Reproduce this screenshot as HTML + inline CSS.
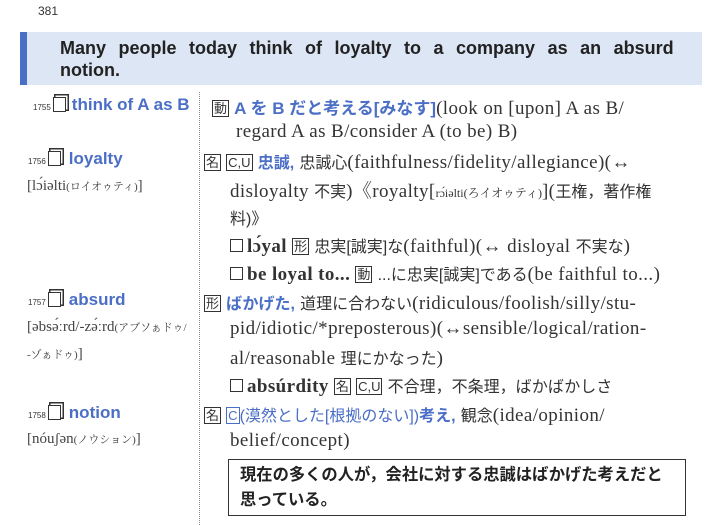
<!DOCTYPE html>
<html><head><meta charset="utf-8"><style>
body{margin:0;width:720px;height:525px;background:#fff;position:relative;overflow:hidden;font-family:"Liberation Serif","Noto Serif CJK SC",serif;color:#333}
.a{position:absolute;white-space:nowrap}
.sans{font-family:"Liberation Sans","Noto Sans CJK JP",sans-serif}
.blue{color:#4b6fc6}
.hw{font-family:"Liberation Sans","Noto Sans CJK JP",sans-serif;font-weight:bold;color:#4b6fc6;font-size:17px}
.num{font-size:8px;font-family:"Liberation Sans",sans-serif;color:#333}
.cb{display:inline-block;width:11px;height:13px;border:1.5px solid #333;box-shadow:2px -2px 0 -0.5px #fff,2px -2px 0 1px #333;vertical-align:-2px;margin:0 8px 0 2px}
.bx{display:inline-block;border:1.3px solid #333;font-size:13px;line-height:15px;padding:0 1px;font-family:"Liberation Sans","Noto Sans CJK JP",sans-serif;vertical-align:1px;letter-spacing:0}
.r{font-size:19px;letter-spacing:0.4px}
.j{font-family:"Liberation Sans","Noto Sans CJK JP",sans-serif;font-size:16px;letter-spacing:0}
.pr{font-size:15px;color:#444}
.sq{display:inline-block;width:11px;height:11px;border:1.5px solid #333;margin-right:4px;vertical-align:0}
</style></head><body>
<div class="a sans" style="left:38px;top:4px;font-size:12px;color:#333">381</div>
<div class="a" style="left:20px;top:32px;width:682px;height:53px;background:#dce6f4"></div>
<div class="a" style="left:20px;top:32px;width:7px;height:53px;background:#4a6fc7"></div>
<div class="a sans" style="left:60px;top:37px;font-size:18px;font-weight:bold;color:#222;line-height:22px;word-spacing:7.5px">Many people today think of loyalty to a company as an absurd<br>notion.</div>
<div class="a" style="left:199px;top:92px;height:433px;border-left:1.5px dotted #888"></div>

<div class="a" style="left:33px;top:95px"><span class="num">1755</span><span class="cb" style="margin-right:6px"></span><span class="hw" style="font-size:17px">think of A as B</span></div>
<div class="a r" style="left:212px;top:94px"><span class="bx">動</span> <span class="sans blue" style="font-weight:bold;font-size:17px;letter-spacing:0">A を B だと考える[みなす]</span>(look on [upon] A as B/</div>
<div class="a r" style="left:236px;top:121px">regard A as B/consider A (to be) B)</div>

<div class="a" style="left:28px;top:149px"><span class="num">1756</span><span class="cb"></span><span class="hw">loyalty</span></div>
<div class="a pr" style="left:27px;top:178px">[lɔ́iəlti<span style="font-size:11px">(ロイオゥティ)</span>]</div>
<div class="a r" style="left:204px;top:149px"><span class="bx">名</span> <span class="bx">C,U</span> <span class="sans blue" style="font-weight:bold;font-size:16px;letter-spacing:0">忠誠,</span> <span class="j">忠誠心</span>(faithfulness/fidelity/allegiance)(↔</div>
<div class="a r" style="left:230px;top:176px">disloyalty <span class="j">不実</span>)《royalty[<span style="font-size:12px;letter-spacing:0">rɔ́iəlti(ろイオゥティ)</span>](<span class="j">王権，著作権</span></div>
<div class="a j" style="left:230px;top:205px">料)》</div>
<div class="a r" style="left:230px;top:233px"><span class="sq"></span><b>lɔ́yal</b> <span class="bx">形</span> <span class="j">忠実[誠実]な</span>(faithful)(↔ disloyal <span class="j">不実な</span>)</div>
<div class="a r" style="left:230px;top:261px"><span class="sq"></span><b>be loyal to...</b> <span class="bx">動</span> <span class="j">...に忠実[誠実]である</span>(be faithful to...)</div>

<div class="a" style="left:28px;top:290px"><span class="num">1757</span><span class="cb"></span><span class="hw">absurd</span></div>
<div class="a pr" style="left:27px;top:319px">[əbsə́ːrd/-zə́ːrd<span style="font-size:11px">(アブソぁドゥ/</span></div>
<div class="a pr" style="left:27px;top:346px"><span style="font-size:11px">-ゾぁドゥ)</span>]</div>
<div class="a r" style="left:204px;top:290px"><span class="bx">形</span> <span class="sans blue" style="font-weight:bold;font-size:16px;letter-spacing:0">ばかげた,</span> <span class="j">道理に合わない</span>(ridiculous/foolish/silly/stu-</div>
<div class="a r" style="left:230px;top:318px">pid/idiotic/*preposterous)(↔sensible/logical/ration-</div>
<div class="a r" style="left:230px;top:345px">al/reasonable <span class="j">理にかなった</span>)</div>
<div class="a r" style="left:230px;top:373px"><span class="sq"></span><b>absúrdity</b> <span class="bx">名</span> <span class="bx">C,U</span> <span class="j">不合理，不条理，ばかばかしさ</span></div>

<div class="a" style="left:28px;top:403px"><span class="num">1758</span><span class="cb"></span><span class="hw">notion</span></div>
<div class="a pr" style="left:27px;top:431px">[nóuʃən<span style="font-size:11px">(ノウション)</span>]</div>
<div class="a r" style="left:204px;top:402px"><span class="bx">名</span> <span class="bx blue" style="border-color:#4b6fc6">C</span><span class="sans blue" style="font-size:16px;letter-spacing:0">(漠然とした[根拠のない])<b>考え,</b></span> <span class="j">観念</span>(idea/opinion/</div>
<div class="a r" style="left:230px;top:430px">belief/concept)</div>

<div class="a" style="left:228px;top:459px;width:456px;height:55px;border:1.5px solid #333"></div>
<div class="a sans" style="left:240px;top:463px;font-size:16.3px;font-weight:bold;color:#222;line-height:25px">現在の多くの人が，会社に対する忠誠はばかげた考えだと<br>思っている。</div>
</body></html>
